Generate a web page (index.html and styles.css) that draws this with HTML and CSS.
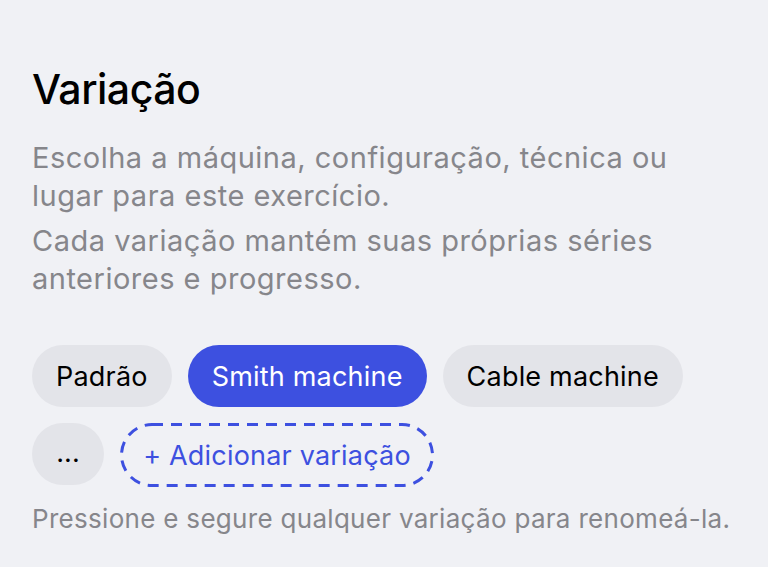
FILE: index.html
```html
<!DOCTYPE html>
<html lang="pt">
<head>
<meta charset="utf-8">
<link rel="stylesheet" href="styles.css">
</head>
<body>
<section class="panel">
  <h1 class="title">Variação</h1>
  <p class="desc">Escolha a máquina, configuração, técnica ou lugar para este exercício.</p>
  <p class="desc second">Cada variação mantém suas próprias séries anteriores e progresso.</p>
  <div class="chips">
    <span class="chip">Padrão</span>
    <span class="chip selected">Smith machine</span>
    <span class="chip">Cable machine</span>
    <span class="chip more">...</span>
    <span class="chip add">
      <svg class="dash" width="314" height="64" viewBox="0 0 314 64" aria-hidden="true">
        <rect x="1.5" y="1.5" width="311" height="61" rx="30.5" ry="30.5" fill="none" stroke="#3d50e0" stroke-width="3" stroke-dasharray="11 8"/>
      </svg>
      + Adicionar variação
    </span>
  </div>
  <p class="hint">Pressione e segure qualquer variação para renomeá-la.</p>
</section>
</body>
</html>
```
FILE: styles.css
```css
html, body {
  margin: 0;
  padding: 0;
  background: #f0f1f5;
}
body {
  font-family: Inter, "Noto Sans", sans-serif;
  width: 768px;
  height: 567px;
  overflow: hidden;
}
.panel {
  padding: 62px 32px 0 32px;
}
.title {
  margin: 0;
  font-size: 41px;
  font-weight: 500;
  color: #000;
  line-height: 54px;
  letter-spacing: -0.5px;
}
.desc {
  margin: 23px 0 0 0;
  font-size: 29px;
  line-height: 38px;
  color: #86868b;
  width: 680px;
  letter-spacing: 0.5px;
}
.desc.second {
  margin-top: 7px;
}
.chips {
  display: flex;
  flex-wrap: wrap;
  gap: 16px;
  margin-top: 47px;
  width: 700px;
}
.chip {
  box-sizing: border-box;
  height: 62px;
  padding: 0 24px;
  border-radius: 31px;
  background: #e3e4e9;
  color: #000;
  font-size: 27px;
  display: flex;
  align-items: center;
  letter-spacing: 0.2px;
}
.chip.selected {
  background: #3d50e0;
  color: #fff;
}
.chip.more {
  width: 72px;
  justify-content: center;
  padding: 0 0 4px 0;
  letter-spacing: 0;
}
.chip.add {
  position: relative;
  background: transparent;
  color: #3d50e0;
  width: 314px;
  height: 64px;
  justify-content: center;
  padding: 0;
  border-radius: 32px;
}
.dash {
  position: absolute;
  left: 0;
  top: 0;
}
.hint {
  margin: 16px 0 0 0;
  font-size: 26px;
  line-height: 32px;
  color: #86868b;
  letter-spacing: 0.3px;
}
```
